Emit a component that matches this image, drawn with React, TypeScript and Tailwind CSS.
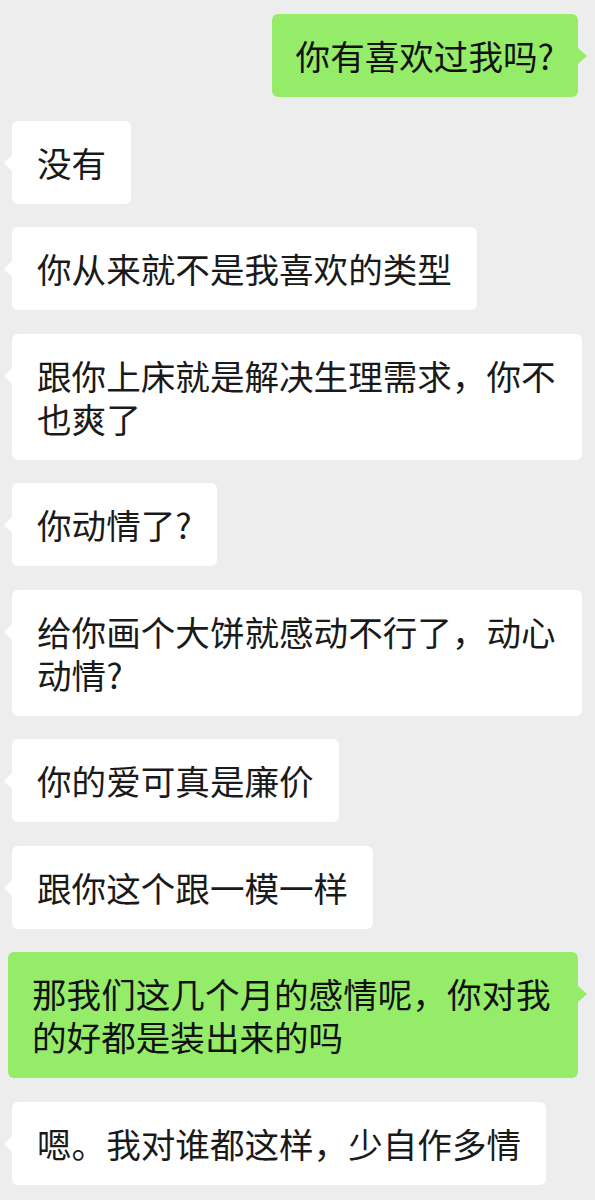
import React from "react";

type Msg = { me: boolean; text: string };

const msgs: Msg[] = [
  { me: true, text: "你有喜欢过我吗?" },
  { me: false, text: "没有" },
  { me: false, text: "你从来就不是我喜欢的类型" },
  { me: false, text: "跟你上床就是解决生理需求，你不也爽了" },
  { me: false, text: "你动情了?" },
  { me: false, text: "给你画个大饼就感动不行了，动心动情?" },
  { me: false, text: "你的爱可真是廉价" },
  { me: false, text: "跟你这个跟一模一样" },
  { me: true, text: "那我们这几个月的感情呢，你对我的好都是装出来的吗" },
  { me: false, text: "嗯。我对谁都这样，少自作多情" },
];

function Bubble({ me, text }: Msg) {
  return (
    <div
      className={
        me
          ? "relative self-end mr-[17px] max-w-[570px] rounded-[6px] bg-[#95ec69] px-[24px] py-[20px] text-[34.6px] leading-[43px] text-[#111111]"
          : "relative self-start ml-[12px] max-w-[570px] rounded-[6px] bg-white px-[25px] py-[20px] text-[34.6px] leading-[43px] text-[#1a1a1a]"
      }
    >
      {me ? (
        <span className="absolute right-[-9px] top-[34px] h-0 w-0 border-y-[8px] border-l-[9px] border-y-transparent border-l-[#95ec69]" />
      ) : (
        <span className="absolute left-[-8px] top-[34px] h-0 w-0 border-y-[8px] border-r-[8px] border-y-transparent border-r-white" />
      )}
      {text}
    </div>
  );
}

export default function App() {
  return (
    <div
      className="flex min-h-[1200px] w-[595px] flex-col gap-[23.5px] bg-[#ededed] pt-[14px]"
      style={{ fontFamily: '"Noto Sans CJK SC", "Noto Sans", sans-serif' }}
    >
      {msgs.map((m, i) => (
        <Bubble key={i} {...m} />
      ))}
    </div>
  );
}
